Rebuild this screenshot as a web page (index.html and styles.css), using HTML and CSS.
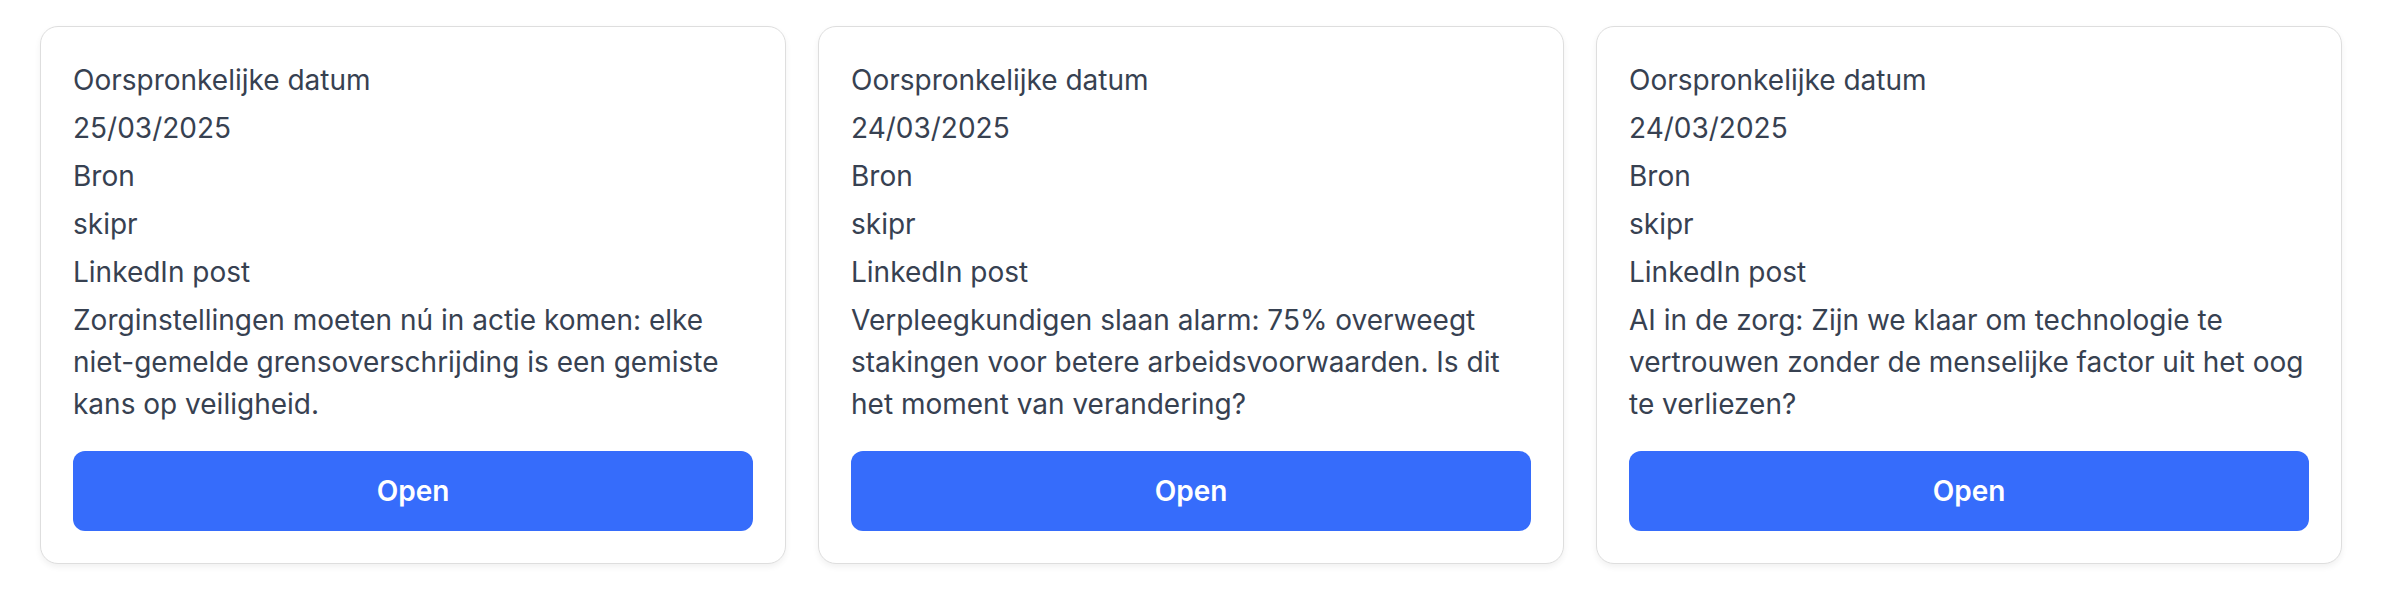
FILE: index.html
```html
<!DOCTYPE html>
<html lang="en">
<head>
    <meta charset="UTF-8">
    <meta name="viewport" content="width=device-width, initial-scale=1.0">
    <title>Posts</title>
    <link rel="stylesheet" href="styles.css">
</head>

<body>
    <section class="grid">
        <div class="card">
            <div class="fields">
                <p>Oorspronkelijke datum</p>
                <p>25/03/2025</p>
                <p>Bron</p>
                <p>skipr</p>
                <p>LinkedIn post</p>
                <p>Zorginstellingen moeten nú in actie komen: elke niet-gemelde grensoverschrijding is een gemiste kans op veiligheid.</p>
            </div>
            <button class="btn">Open</button>
        </div>

        <div class="card">
            <div class="fields">
                <p>Oorspronkelijke datum</p>
                <p>24/03/2025</p>
                <p>Bron</p>
                <p>skipr</p>
                <p>LinkedIn post</p>
                <p>Verpleegkundigen slaan alarm: 75% overweegt stakingen voor betere arbeidsvoorwaarden. Is dit het moment van verandering?</p>
            </div>
            <button class="btn">Open</button>
        </div>

        <div class="card">
            <div class="fields">
                <p>Oorspronkelijke datum</p>
                <p>24/03/2025</p>
                <p>Bron</p>
                <p>skipr</p>
                <p>LinkedIn post</p>
                <p>AI in de zorg: Zijn we klaar om technologie te vertrouwen zonder de menselijke factor uit het oog te verliezen?</p>
            </div>
            <button class="btn">Open</button>
        </div>
    </section>
</body>

</html>
```

FILE: styles.css
```css
body {
    margin: 0;
    background-color: #ffffff;
    font-family: Inter, "Noto Sans", sans-serif;
    color: #374151;
}

.grid {
    display: grid;
    grid-template-columns: repeat(3, 1fr);
    gap: 32px;
    padding: 26px 40px;
}

.card {
    display: flex;
    flex-direction: column;
    padding: 32px;
    border: 1px solid #dedede;
    border-radius: 18px;
    box-shadow: 0 3px 6px rgba(0, 0, 0, 0.06);
    background-color: #ffffff;
}

.fields {
    display: flex;
    flex-direction: column;
    gap: 6px;
}

.fields p {
    margin: 0;
    font-size: 28px;
    line-height: 42px;
}

.btn {
    margin-top: auto;
    height: 80px;
    border: none;
    border-radius: 12px;
    background-color: #366cfb;
    color: #ffffff;
    font-family: Inter, "Noto Sans", sans-serif;
    font-size: 28px;
    font-weight: 600;
}

.fields + .btn {
    margin-top: 26px;
}
```
